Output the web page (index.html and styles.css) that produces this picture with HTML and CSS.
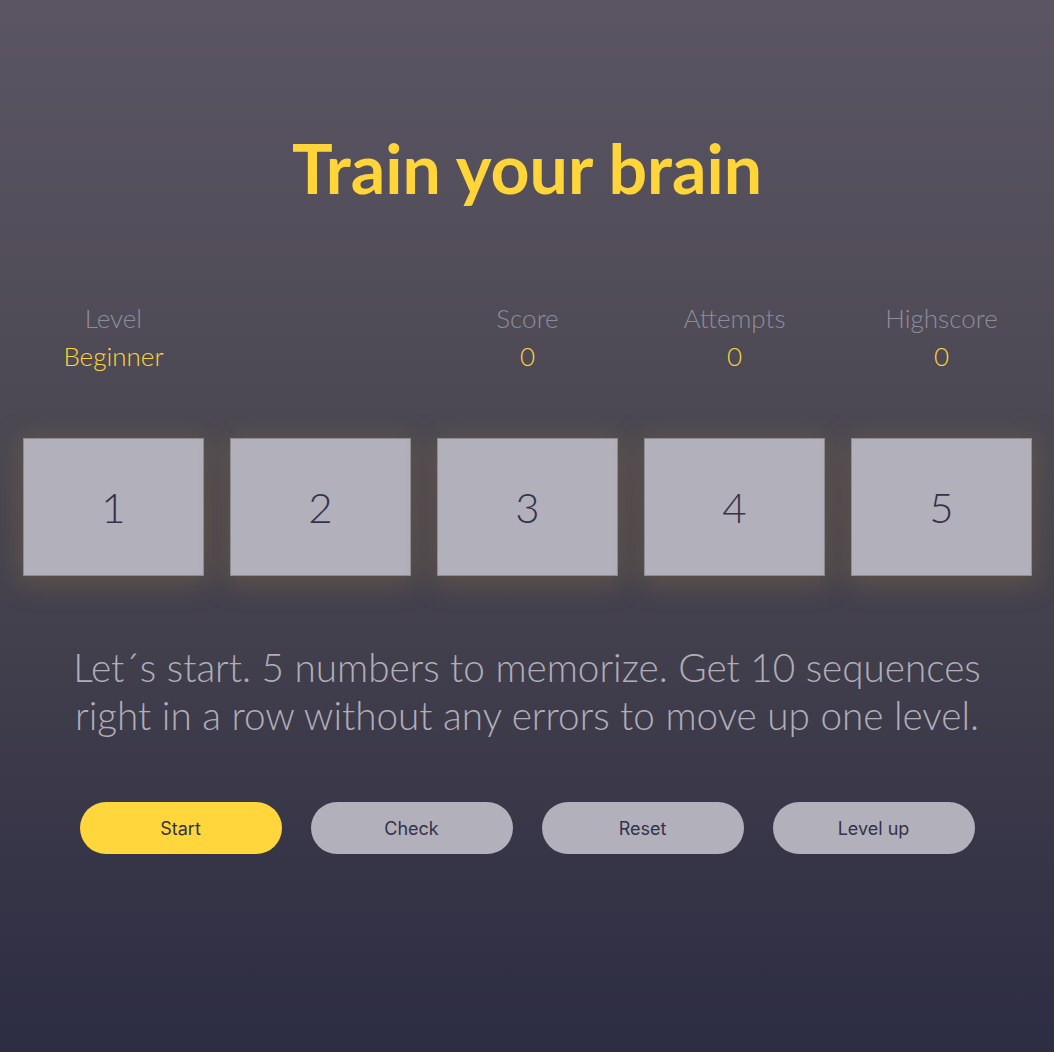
FILE: index.html
```html
<!DOCTYPE html>
<html lang="en">
<head>
<meta charset="utf-8">
<title>Train your brain</title>
<link rel="stylesheet" href="styles.css">
</head>
<body>
<main class="page">
  <h1 class="title">Train your brain</h1>
  <section class="stats">
    <div class="stat"><div class="stat-label">Level</div><div class="stat-value">Beginner</div></div>
    <div class="stat"></div>
    <div class="stat"><div class="stat-label">Score</div><div class="stat-value">0</div></div>
    <div class="stat"><div class="stat-label">Attempts</div><div class="stat-value">0</div></div>
    <div class="stat"><div class="stat-label">Highscore</div><div class="stat-value">0</div></div>
  </section>
  <section class="boxes">
    <div class="box">1</div>
    <div class="box">2</div>
    <div class="box">3</div>
    <div class="box">4</div>
    <div class="box">5</div>
  </section>
  <p class="message">Let´s start. 5 numbers to memorize. Get 10 sequences right in a row without any errors to move up one level.</p>
  <div class="buttons">
    <button class="btn btn-primary">Start</button>
    <button class="btn">Check</button>
    <button class="btn">Reset</button>
    <button class="btn">Level up</button>
  </div>
</main>
</body>
</html>
```

FILE: styles.css
```css
html, body {
  margin: 0;
  padding: 0;
  height: 100%;
}
body {
  background: linear-gradient(to bottom, #5b5563 0%, #48454f 50%, #2c2c43 100%);
  font-family: Lato, "Noto Sans", sans-serif;
  min-height: 1052px;
}
.page {
  display: flex;
  flex-direction: column;
  align-items: stretch;
  padding-top: 128px;
}
.title {
  margin: 0;
  text-align: center;
  font-weight: 700;
  font-size: 68px;
  line-height: 80px;
  color: #ffd53a;
}
.stats {
  margin-top: 91px;
  display: grid;
  grid-template-columns: repeat(5, 1fr);
  column-gap: 26px;
  padding: 0 22px 0 23px;
}
.stat {
  text-align: center;
}
.stat-label {
  font-weight: 300;
  font-size: 26px;
  line-height: 38px;
  color: #8f8c99;
}
.stat-value {
  font-weight: 300;
  font-size: 26px;
  line-height: 38px;
  color: #ffd53a;
}
.boxes {
  margin-top: 63px;
  display: grid;
  grid-template-columns: repeat(5, 1fr);
  column-gap: 26px;
  padding: 0 22px 0 23px;
}
.box {
  height: 138px;
  box-sizing: border-box;
  background: #b2b0ba;
  border: 1px solid #8f8c93;
  box-shadow: 0 4px 24px 4px rgba(125, 105, 70, 0.45);
  display: flex;
  align-items: center;
  justify-content: center;
  font-weight: 300;
  font-size: 42px;
  color: #34334a;
}
.message {
  margin: 67px auto 0;
  max-width: 940px;
  text-align: center;
  font-weight: 300;
  font-size: 38.7px;
  line-height: 48px;
  color: #b0aeb9;
}
.buttons {
  margin-top: 63px;
  display: flex;
  justify-content: center;
  gap: 29px;
}
.btn {
  width: 202px;
  height: 52px;
  border: none;
  border-radius: 26px;
  background: #b2b0ba;
  color: #33324a;
  font-family: Inter, "Noto Sans", sans-serif;
  font-size: 18px;
  font-weight: 400;
  padding: 0;
}
.btn-primary {
  background: #ffd63c;
}
```
